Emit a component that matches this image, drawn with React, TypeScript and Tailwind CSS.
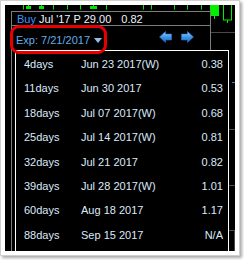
import React from 'react';

const rows = [
  { days: '4days', date: 'Jun 23 2017(W)', value: '0.38' },
  { days: '11days', date: 'Jun 30 2017', value: '0.53' },
  { days: '18days', date: 'Jul 07 2017(W)', value: '0.68' },
  { days: '25days', date: 'Jul 14 2017(W)', value: '0.81' },
  { days: '32days', date: 'Jul 21 2017', value: '0.82' },
  { days: '39days', date: 'Jul 28 2017(W)', value: '1.01' },
  { days: '60days', date: 'Aug 18 2017', value: '1.17' },
  { days: '88days', date: 'Sep 15 2017', value: 'N/A' },
];

function ChartBackdrop() {
  // coordinates are relative to the black screen area
  const ticks = [18, 48, 62, 75, 101, 138, 146, 169, 182, 196];
  const blocks = [
    [21, 26],
    [34, 39],
    [85, 92],
  ];
  return (
    <svg className="absolute inset-0" width="231" height="246" viewBox="0 0 231 246">
      {ticks.map(x => (
        <line key={x} x1={x + 0.5} y1="0" x2={x + 0.5} y2="4.5" stroke="#00e600" strokeWidth="1" />
      ))}
      {blocks.map(([a, b]) => (
        <g key={a}>
          <rect x={a} y="1" width={b - a} height="3" fill="#00e600" />
          <line x1={(a + b) / 2} y1="0" x2={(a + b) / 2} y2="1" stroke="#00e600" />
        </g>
      ))}
      <rect x="205" y="0" width="9" height="11" fill="#00f000" />
      <line x1="209.5" y1="11" x2="209.5" y2="14" stroke="#00f000" />
      <rect x="218.5" y="-1" width="8" height="16" fill="none" stroke="#00f000" />
      <line x1="222.5" y1="15" x2="222.5" y2="18" stroke="#00f000" />
      <line x1="206" y1="27.5" x2="231" y2="27.5" stroke="#4a4a4a" />
      <line x1="224" y1="124.5" x2="231" y2="124.5" stroke="#4a4a4a" />
      <line x1="224" y1="180.5" x2="231" y2="180.5" stroke="#4a4a4a" />
      <line x1="224" y1="225.5" x2="231" y2="225.5" stroke="#4a4a4a" />
      <line x1="229.5" y1="225" x2="229.5" y2="246" stroke="#4a4a4a" />
      <line x1="227" y1="77.5" x2="231" y2="77.5" stroke="#2f7fd8" />
    </svg>
  );
}

function NavArrow({ dir }: { dir: 'left' | 'right' }) {
  const id = `g-${dir}`;
  return (
    <svg width="13" height="12" viewBox="0 0 13 12" className={dir === 'left' ? '' : 'scale-x-[-1]'}>
      <defs>
        <linearGradient id={id} x1="0" y1="0" x2="0" y2="1">
          <stop offset="0" stopColor="#a6d4ff" />
          <stop offset="0.5" stopColor="#3d95ec" />
          <stop offset="1" stopColor="#1f6cc4" />
        </linearGradient>
      </defs>
      <path d="M0.5 6 L6.5 0.5 L6.5 3 L12.5 3 L12.5 9 L6.5 9 L6.5 11.5 Z" fill={`url(#${id})`} stroke="#2a74c8" strokeWidth="0.6" />
    </svg>
  );
}

export default function App() {
  return (
    <div className="w-[244px] h-[260px] bg-white font-['Liberation_Sans',Arial,sans-serif]">
      <div className="w-[240px] h-[256px] bg-white border border-[#cfcfcf] p-[4px] shadow-[2px_2px_3px_rgba(0,0,0,0.35)]">
        <div className="relative w-[230px] h-[246px] bg-black overflow-hidden">
          <ChartBackdrop />

          <div className="relative ml-[6px] mt-[6px] w-[200px] h-[260px] border-l border-r border-t border-[#7c7c7c] bg-black">
            <div className="h-[14px] border-b border-[#7c7c7c] pl-[5px] pt-[1px] text-[11px] leading-[12px] whitespace-nowrap">
              <span className="text-[#3d96ff]">Buy</span>
              <span className="text-[#eef4ff]"> Jul '17 P 29.00</span>
              <span className="text-[#eef4ff] ml-[10px]">0.82</span>
            </div>
            <div className="h-[24px] flex items-start pl-[4px] pt-[9px]">
              <span className="text-[11px] leading-[11px] text-[#62aee8]">Exp: 7/21/2017</span>
              <svg width="8" height="5" viewBox="0 0 8 5" className="ml-[4px] mt-[3px]">
                <path d="M0 0 H8 L4 5 Z" fill="#8fbfe6" />
              </svg>
              <div className="ml-auto mr-[16px] -mt-[4px] flex gap-[9px]">
                <NavArrow dir="left" />
                <NavArrow dir="right" />
              </div>
            </div>
          </div>

          <div className="absolute left-[10px] top-[45px] w-[214px] h-[220px] border border-white bg-black pt-[1px] pl-[8px] pr-[5px] text-[11px] text-[#dde9fa]">
            {rows.map(r => (
              <div key={r.days} className="h-[24.4px] flex items-center whitespace-nowrap">
                <span className="w-[57px]">{r.days}</span>
                <span className="flex-1">{r.date}</span>
                <span>{r.value}</span>
              </div>
            ))}
          </div>

          <div className="absolute left-[5px] top-[20px] w-[97px] h-[29px] border-[3px] border-[#e60000] rounded-[9px]" />
        </div>
      </div>
    </div>
  );
}
